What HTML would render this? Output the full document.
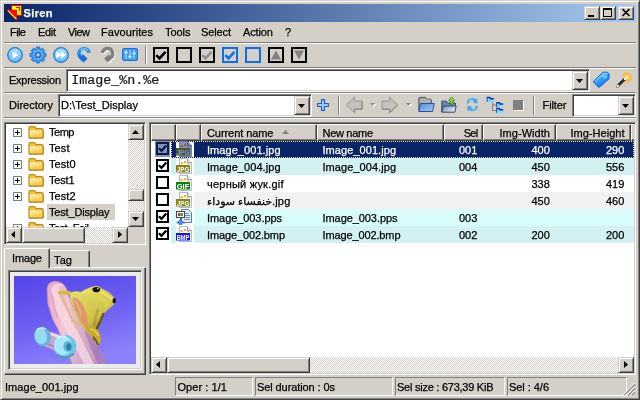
<!DOCTYPE html>
<html><head><meta charset="utf-8"><title>Siren</title><style>
html,body{margin:0;padding:0;background:#d4d0c8;}
body{width:640px;height:400px;overflow:hidden;position:relative;font:11px/13px "Liberation Sans","DejaVu Sans",sans-serif;color:#000;}
*{box-sizing:border-box;}
.a{position:absolute;}
.t{position:absolute;white-space:nowrap;height:13px;line-height:13px;-webkit-text-stroke:0.25px currentColor;}
.sunk{border:1px solid;border-color:#808080 #fff #fff #808080;box-shadow:inset 1px 1px #404040,inset -1px -1px #d4d0c8;background:#fff;}
.btn{border:1px solid;border-color:#d4d0c8 #404040 #404040 #d4d0c8;box-shadow:inset 1px 1px #fff,inset -1px -1px #808080;background:#d4d0c8;}
.trk{background:repeating-conic-gradient(#fff 0 25%,#d4d0c8 0 50%) 0 0/2px 2px;}
.hs{height:2px;border-top:1px solid #808080;border-bottom:1px solid #fff;}
.vs{width:2px;border-left:1px solid #808080;border-right:1px solid #fff;}
.hd{position:absolute;top:124px;height:17px;background:#d4d0c8;border:1px solid;border-color:#fff #404040 #404040 #fff;box-shadow:inset -1px -1px #808080;}
.pan{border:1px solid;border-color:#808080 #fff #fff #808080;box-shadow:inset 1px 1px #fff,inset -1px -1px #808080;}
svg{position:absolute;overflow:visible;}
</style></head><body>
<div id="root" style="position:absolute;left:0;top:0;width:640px;height:400px;will-change:transform">
<div class="a" style="left:0;top:0;width:640px;height:400px;border:1px solid;border-color:#d4d0c8 #404040 #404040 #d4d0c8;box-shadow:inset 1px 1px #fff,inset -1px -1px #808080;"></div>
<div class="a" style="left:4px;top:4px;width:632px;height:18px;background:linear-gradient(90deg,#0a246a,#a6caf0);"></div>
<svg style="left:0;top:0" width="24" height="24" viewBox="0 0 24 24"><rect x="11.5" y="5.5" width="10" height="10" fill="#ffff00" stroke="#ff0000"/><polygon points="6,9.7 17,9.7 17,21" fill="#ff0000"/><path d="M8 10.6L16.3 19" stroke="#ffff00" stroke-width="1.1"/><path d="M16 7.5h3.5v3.5" fill="none" stroke="#ff0000" stroke-width="1.1"/></svg>
<span class="t" id="t1" style="top:7px;left:23.5px;letter-spacing:0.371px;font-weight:bold;color:#fff;">Siren</span>
<div class="a btn" style="left:584px;top:6px;width:16px;height:14px;"></div>
<div class="a btn" style="left:600px;top:6px;width:16px;height:14px;"></div>
<div class="a btn" style="left:618px;top:6px;width:16px;height:14px;"></div>
<div class="a" style="left:588px;top:15px;width:6px;height:2px;background:#000"></div>
<div class="a" style="left:603px;top:8px;width:9px;height:9px;border:1px solid #000;border-top-width:2px"></div>
<svg style="left:622px;top:9px" width="8" height="7" viewBox="0 0 8 7"><path d="M0.5 0L7.5 7M7.5 0L0.5 7" stroke="#000" stroke-width="1.6" fill="none"/></svg>
<span class="t" id="t2" style="top:26px;left:10px;letter-spacing:-0.578px;">File</span>
<span class="t" id="t3" style="top:26px;left:38px;letter-spacing:-0.323px;">Edit</span>
<span class="t" id="t4" style="top:26px;left:68px;letter-spacing:-0.552px;">View</span>
<span class="t" id="t5" style="top:26px;left:101px;letter-spacing:0.071px;">Favourites</span>
<span class="t" id="t6" style="top:26px;left:165px;letter-spacing:-0.047px;">Tools</span>
<span class="t" id="t7" style="top:26px;left:201px;letter-spacing:-0.116px;">Select</span>
<span class="t" id="t8" style="top:26px;left:243px;letter-spacing:-0.116px;">Action</span>
<span class="t" id="t9" style="top:26px;left:285px;">?</span>
<div class="a hs" style="left:4px;top:42px;width:632px"></div>
<svg style="left:7px;top:47px" width="16" height="16" viewBox="0 0 16 16"><defs><radialGradient id="g15" cx="0.5" cy="0.35" r="0.7"><stop offset="0" stop-color="#c4eeff"/><stop offset="1" stop-color="#4cb2f8"/></radialGradient></defs><circle cx="8" cy="8" r="7.3" fill="url(#g15)" stroke="#2178d6" stroke-width="1.2"/><polygon points="5,3.6 5,12.2 12.8,7.9" fill="#fff" stroke="#5aa8f0" stroke-width="0.6"/></svg>
<svg style="left:30px;top:47px" width="16" height="16" viewBox="0 0 16 16"><polygon points="13.18,5.87 15.94,6.39 15.94,9.61 13.18,10.13 13.17,10.16 14.75,12.48 12.48,14.75 10.16,13.17 10.13,13.18 9.61,15.94 6.39,15.94 5.87,13.18 5.84,13.17 3.52,14.75 1.25,12.48 2.83,10.16 2.82,10.13 0.06,9.61 0.06,6.39 2.82,5.87 2.83,5.84 1.25,3.52 3.52,1.25 5.84,2.83 5.87,2.82 6.39,0.06 9.61,0.06 10.13,2.82 10.16,2.83 12.48,1.25 14.75,3.52 13.17,5.84" fill="#3a98f0" stroke="#1a6cd0" stroke-width="0.9" stroke-linejoin="round"/><circle cx="8" cy="8" r="4.4" fill="none" stroke="#6cbcf8" stroke-width="1.2"/><circle cx="8" cy="8" r="2.3" fill="#d4d0c8" stroke="#1a5cb8" stroke-width="1.1"/></svg>
<svg style="left:53px;top:47px" width="16" height="16" viewBox="0 0 16 16"><defs><radialGradient id="g61" cx="0.5" cy="0.35" r="0.7"><stop offset="0" stop-color="#c4eeff"/><stop offset="1" stop-color="#4cb2f8"/></radialGradient></defs><circle cx="8" cy="8" r="7.3" fill="url(#g61)" stroke="#2178d6" stroke-width="1.2"/><polygon points="3.2,4.6 3.2,11.6 8,8.1" fill="#fff"/><polygon points="8.2,4.6 8.2,11.6 13.2,8.1" fill="#fff"/></svg>
<svg style="left:74px;top:44px" width="44" height="22" viewBox="0 0 44 22"><defs><linearGradient id="ub" x1="0" y1="0" x2="0.6" y2="1"><stop offset="0" stop-color="#28a8ff"/><stop offset="0.5" stop-color="#1c84ec"/><stop offset="1" stop-color="#0c5cd0"/></linearGradient></defs><path d="M15.0 8.6A5.1 5.1 0 1 0 8.0 14.2" fill="none" stroke="url(#ub)" stroke-width="3.4"/><path d="M14.6 7.6A4.6 4.6 0 0 0 6.5 6.5" fill="none" stroke="#70d0ff" stroke-width="1.2"/><polygon points="8.3,9.9 13.6,14.4 9.7,18.4 6.3,15.8" fill="#1470e0"/><g transform="translate(1,1)"><path d="M28.5 9A5.1 5.1 0 1 1 35.6 14.2" fill="none" stroke="#fff" stroke-width="3.4"/><polygon points="35.3,9.9 30,14.4 33.9,18.4 37.3,15.8" fill="#fff"/></g><path d="M28.5 9A5.1 5.1 0 1 1 35.6 14.2" fill="none" stroke="#808080" stroke-width="3.4"/><polygon points="35.3,9.9 30,14.4 33.9,18.4 37.3,15.8" fill="#808080"/></svg>
<svg style="left:122px;top:48px" width="16" height="13" viewBox="0 0 16 13"><rect x="0.5" y="0.5" width="15" height="12" rx="1.5" fill="#379cf2" stroke="#1c72d8"/><path d="M4 2v9M8 2v9M12 2v9" stroke="#bfe4ff" stroke-width="1"/><path d="M2.5 4.5h3M6.5 8.5h3M10.5 5.5h3" stroke="#fff" stroke-width="1.6"/></svg>
<div class="a vs" style="left:145px;top:46px;height:18px"></div>
<svg style="left:153px;top:47px" width="16" height="16" viewBox="0 0 16 16"><rect x="1" y="1" width="14" height="14" fill="none" stroke="#000" stroke-width="2"/><path d="M3.3 8.2l3.2 3.2l6-6.6" fill="none" stroke="#000" stroke-width="2.6"/></svg>
<svg style="left:176px;top:47px" width="16" height="16" viewBox="0 0 16 16"><rect x="1" y="1" width="14" height="14" fill="none" stroke="#000" stroke-width="2"/></svg>
<svg style="left:199px;top:47px" width="16" height="16" viewBox="0 0 16 16"><rect x="1" y="1" width="14" height="14" fill="none" stroke="#000" stroke-width="2"/><path d="M3.3 8.2l3.2 3.2l6-6.6" fill="none" stroke="#909090" stroke-width="2.6"/></svg>
<svg style="left:222px;top:47px" width="16" height="16" viewBox="0 0 16 16"><rect x="1" y="1" width="14" height="14" fill="none" stroke="#0f6ee6" stroke-width="2"/><path d="M3.3 8.2l3.2 3.2l6-6.6" fill="none" stroke="#0f6ee6" stroke-width="2.6"/></svg>
<svg style="left:245px;top:47px" width="16" height="16" viewBox="0 0 16 16"><rect x="1" y="1" width="14" height="14" fill="none" stroke="#0f6ee6" stroke-width="2"/></svg>
<svg style="left:268px;top:47px" width="16" height="16" viewBox="0 0 16 16"><rect x="1" y="1" width="14" height="14" fill="none" stroke="#000" stroke-width="2"/><polygon points="8,3.5 13,12.5 3,12.5" fill="#808080"/></svg>
<svg style="left:291px;top:47px" width="16" height="16" viewBox="0 0 16 16"><rect x="1" y="1" width="14" height="14" fill="none" stroke="#000" stroke-width="2"/><polygon points="8,12.5 13,3.5 3,3.5" fill="#808080"/></svg>
<div class="a hs" style="left:4px;top:67px;width:632px"></div>
<span class="t" id="t10" style="top:74px;left:9px;letter-spacing:-0.269px;">Expression</span>
<div class="a sunk" style="left:66px;top:69px;width:524px;height:23px"></div>
<span class="t" id="expr" style="left:71.2px;top:73.2px;height:16px;line-height:16px;font:13.33px/16px 'Liberation Mono',monospace;transform:scaleY(0.9);transform-origin:0 12px;color:#1a1a1a;">Image_%n.%e</span>
<div class="a btn" style="left:572px;top:71px;width:16px;height:19px"></div>
<svg style="left:576px;top:79px" width="7" height="4"><polygon points="0,0 7,0 3.5,4" fill="#000"/></svg>
<svg style="left:590px;top:68px" width="46" height="26" viewBox="0 0 46 26"><defs><linearGradient id="tg" x1="0.2" y1="0" x2="0.8" y2="1"><stop offset="0" stop-color="#8cdcff"/><stop offset="0.45" stop-color="#2ea4ff"/><stop offset="1" stop-color="#0864e0"/></linearGradient></defs><polygon points="3.2,13.7 12.9,4.2 17.4,4.2 19.2,6 19,10.8 8.8,19.6" fill="url(#tg)" stroke="#0c5cd8" stroke-width="1" stroke-linejoin="round"/><path d="M5 13.6L13.3 5.4h3.6" fill="none" stroke="#9adcff" stroke-width="1"/><circle cx="14.8" cy="8.6" r="1.5" fill="#dff2ff" stroke="#7cc8ff" stroke-width="0.6"/><path d="M14.8 7.6v2M13.8 8.6h2" stroke="#2a8cf0" stroke-width="0.6"/><path d="M34.4 8.1L32.0 6.7M35.6 7.1L34.3 4.5M37.1 6.8L37.5 4.1M38.4 7.5L40.3 5.4M39.2 8.8L41.9 8.1M39.1 10.3L41.8 11.2M38.2 11.5L39.9 13.8M36.8 12.0L36.9 14.8M35.3 11.6L33.8 14.0" stroke="#ffb010" stroke-width="1.3"/><circle cx="36.7" cy="9.4" r="2.6" fill="#ffd84a"/><path d="M27.4 18.2L35.8 10" stroke="#1c1c1c" stroke-width="2.8" stroke-linecap="round"/><path d="M28.5 17.2L34.5 11.2" stroke="#787878" stroke-width="0.9" stroke-dasharray="1 1"/><path d="M35 10.8L36.4 9.4" stroke="#fff" stroke-width="2.6" stroke-linecap="round"/><path d="M27.3 18.3L28 17.6" stroke="#e8e8e8" stroke-width="2.2" stroke-linecap="round"/></svg>
<div class="a hs" style="left:4px;top:92px;width:632px"></div>
<span class="t" id="t11" style="top:99px;left:9px;letter-spacing:-0.002px;">Directory</span>
<div class="a sunk" style="left:58px;top:94px;width:254px;height:23px"></div>
<span class="t" id="t12" style="top:99px;left:61px;letter-spacing:0.041px;">D:\Test_Display</span>
<div class="a btn" style="left:294px;top:96px;width:16px;height:19px"></div>
<svg style="left:298px;top:104px" width="7" height="4"><polygon points="0,0 7,0 3.5,4" fill="#000"/></svg>
<svg style="left:317px;top:99px" width="12" height="12" viewBox="0 0 12 12"><path d="M4.5 0.6h3v3.9h3.9v3H7.5v3.9h-3V7.5H0.6v-3h3.9z" fill="#9cc8f6" stroke="#2a5cb8" stroke-width="1.1" stroke-linejoin="round"/></svg>
<div class="a vs" style="left:338px;top:96px;height:19px"></div>
<svg style="left:345px;top:96px" width="18" height="18" viewBox="0 0 18 18"><polygon points="1.2,9 9.5,1.2 9.5,5 17,5 17,13 9.5,13 9.5,16.8" fill="#c4c2bc" stroke="#949494" stroke-width="1" stroke-linejoin="round"/><path d="M9.5 13.4v3.2M9.8 13.3h7.4v-8" fill="none" stroke="#808080" stroke-width="0.8"/></svg>
<svg style="left:370px;top:103px" width="7" height="5"><polygon points="1,1 6,1 3.5,4" fill="#fff"/><polygon points="0,0 5,0 2.5,3" fill="#8c8c8c"/></svg>
<svg style="left:381px;top:96px" width="18" height="18" viewBox="0 0 18 18"><polygon points="16.8,9 8.5,1.2 8.5,5 1,5 1,13 8.5,13 8.5,16.8" fill="#c4c2bc" stroke="#949494" stroke-width="1" stroke-linejoin="round"/><path d="M1 13.3h7.6v3.3l8-7.5" fill="none" stroke="#808080" stroke-width="0.8"/></svg>
<svg style="left:406px;top:103px" width="7" height="5"><polygon points="1,1 6,1 3.5,4" fill="#fff"/><polygon points="0,0 5,0 2.5,3" fill="#8c8c8c"/></svg>
<svg style="left:414px;top:92px" width="70" height="26" viewBox="0 0 70 26"><defs><linearGradient id="f1" x1="0" y1="0" x2="1" y2="1"><stop offset="0" stop-color="#4c8ce4"/><stop offset="1" stop-color="#a8c8f4"/></linearGradient><linearGradient id="f2" x1="0" y1="0" x2="1" y2="0.6"><stop offset="0" stop-color="#6c88b8"/><stop offset="1" stop-color="#e4ecf6"/></linearGradient></defs><path d="M4.8 19V6.6Q4.8 5.4 6 5.4h5.4l1.6 1.8h3.6Q17.4 7.2 17.4 8.4V12" fill="#a4a4a4" stroke="#50545c" stroke-width="1"/><path d="M6 8h10M6 10h10" stroke="#c4c4c4" stroke-width="0.8"/><path d="M6.6 11.5h13.6l-1.6 8H4.8z" fill="url(#f1)" stroke="#30508c" stroke-width="1"/><path d="M27.8 20V9.2h4.6l1.4 1.8h7.6v3" fill="#6c86b4" stroke="#34486c" stroke-width="1"/><path d="M29.4 14h12.8l-1.4 6.2H27.8z" fill="url(#f2)" stroke="#34486c" stroke-width="1"/><polygon points="37.6,5 40.6,8.6 38.8,8.6 38.8,12.4 36.4,12.4 36.4,8.6 34.6,8.6" fill="#84e428" stroke="#2c7414" stroke-width="0.7"/><path d="M53.8 11.2Q54.6 7.4 58.2 7.2Q60.4 7.2 61.6 8.6" fill="none" stroke="#3ca4f0" stroke-width="2.3"/><polygon points="63.4,6 63.2,11.4 58.6,10.2" fill="#3ca4f0"/><path d="M63 14Q62.2 17.8 58.6 18Q56.4 18 55.2 16.6" fill="none" stroke="#3ca4f0" stroke-width="2.3"/><polygon points="53.4,19.2 53.6,13.8 58.2,15" fill="#3ca4f0"/><path d="M54.6 10Q55.6 7.6 58.4 7.4M62.2 15.2Q61.2 17.6 58.4 17.8" fill="none" stroke="#a4e0ff" stroke-width="0.9"/></svg>
<svg style="left:480px;top:92px" width="30" height="26" viewBox="0 0 30 26"><path d="M12.5 10v8.5h4M12.5 13h4" fill="none" stroke="#808080" stroke-width="1"/><path d="M6.8 5h3l0.8 1h3.2v4.2h-7z" fill="#84dcff" stroke="none"/><path d="M6.8 5.6h3l0.8 1.2h3.2" fill="none" stroke="#1230a8" stroke-width="1.5"/><path d="M7.2 5.2v4.6" stroke="#1a50c8" stroke-width="1"/><path d="M16.2 10.2h3l0.8 1h3.2v4.2h-7z" fill="#84dcff" stroke="none"/><path d="M16.2 10.8h3l0.8 1.2h3.2" fill="none" stroke="#1230a8" stroke-width="1.5"/><path d="M16.6 10.4v4.6" stroke="#1a50c8" stroke-width="1"/><path d="M16.2 16h3l0.8 1h3.2v4.2h-7z" fill="#84dcff" stroke="none"/><path d="M16.2 16.6h3l0.8 1.2h3.2" fill="none" stroke="#1230a8" stroke-width="1.5"/><path d="M16.6 16.2v4.6" stroke="#1a50c8" stroke-width="1"/></svg>
<div class="a" style="left:514px;top:101px;width:10px;height:10px;background:#fff"></div>
<div class="a" style="left:513px;top:100px;width:10px;height:10px;background:#808080"></div>
<div class="a vs" style="left:533px;top:96px;height:19px"></div>
<span class="t" id="t13" style="top:99px;left:542.5px;letter-spacing:-0.091px;">Filter</span>
<div class="a sunk" style="left:572px;top:94px;width:64px;height:23px"></div>
<div class="a btn" style="left:618px;top:96px;width:16px;height:19px"></div>
<svg style="left:622px;top:104px" width="7" height="4"><polygon points="0,0 7,0 3.5,4" fill="#000"/></svg>
<div class="a hs" style="left:4px;top:117px;width:632px"></div>
<div class="a sunk" style="left:4px;top:122px;width:142px;height:123px"></div>
<div class="a" style="left:6px;top:124px;width:122px;height:103px;overflow:hidden;background:#fff" id="tree">
<svg style="left:7px;top:4px" width="9" height="9" viewBox="0 0 9 9"><rect x="0.5" y="0.5" width="8" height="8" fill="#fff" stroke="#808080"/><path d="M2 4.5h5M4.5 2v5" stroke="#000" stroke-width="1"/></svg>
<svg style="left:22px;top:1px" width="16" height="14" viewBox="0 0 16 14"><defs><linearGradient id="fg" x1="0" y1="0" x2="0.5" y2="1"><stop offset="0" stop-color="#fff4b8"/><stop offset="1" stop-color="#f6cc48"/></linearGradient></defs><path d="M1 12.2V3Q1 1.6 2.4 1.6h3.4Q6.8 1.6 7.4 2.6L8 3.6h6Q15 3.6 15 4.8V12.2Q15 13 14.2 13H1.8Q1 13 1 12.2z" fill="#f2c440" stroke="#c08a18" stroke-width="1.2"/><path d="M1.8 5.4h12.6v6.8H1.8z" fill="url(#fg)"/><path d="M1.2 13.2h13.4Q15.3 13.2 15.3 12.4V5" fill="none" stroke="#8c6410" stroke-width="0.8" opacity="0.8"/></svg>
<span class="t" id="t14" style="top:1.5px;left:43px;letter-spacing:-0.469px;">Temp</span>
<svg style="left:7px;top:20px" width="9" height="9" viewBox="0 0 9 9"><rect x="0.5" y="0.5" width="8" height="8" fill="#fff" stroke="#808080"/><path d="M2 4.5h5M4.5 2v5" stroke="#000" stroke-width="1"/></svg>
<svg style="left:22px;top:17px" width="16" height="14" viewBox="0 0 16 14"><defs><linearGradient id="fg" x1="0" y1="0" x2="0.5" y2="1"><stop offset="0" stop-color="#fff4b8"/><stop offset="1" stop-color="#f6cc48"/></linearGradient></defs><path d="M1 12.2V3Q1 1.6 2.4 1.6h3.4Q6.8 1.6 7.4 2.6L8 3.6h6Q15 3.6 15 4.8V12.2Q15 13 14.2 13H1.8Q1 13 1 12.2z" fill="#f2c440" stroke="#c08a18" stroke-width="1.2"/><path d="M1.8 5.4h12.6v6.8H1.8z" fill="url(#fg)"/><path d="M1.2 13.2h13.4Q15.3 13.2 15.3 12.4V5" fill="none" stroke="#8c6410" stroke-width="0.8" opacity="0.8"/></svg>
<span class="t" id="t15" style="top:17.5px;left:43px;letter-spacing:0.104px;">Test</span>
<svg style="left:7px;top:36px" width="9" height="9" viewBox="0 0 9 9"><rect x="0.5" y="0.5" width="8" height="8" fill="#fff" stroke="#808080"/><path d="M2 4.5h5M4.5 2v5" stroke="#000" stroke-width="1"/></svg>
<svg style="left:22px;top:33px" width="16" height="14" viewBox="0 0 16 14"><defs><linearGradient id="fg" x1="0" y1="0" x2="0.5" y2="1"><stop offset="0" stop-color="#fff4b8"/><stop offset="1" stop-color="#f6cc48"/></linearGradient></defs><path d="M1 12.2V3Q1 1.6 2.4 1.6h3.4Q6.8 1.6 7.4 2.6L8 3.6h6Q15 3.6 15 4.8V12.2Q15 13 14.2 13H1.8Q1 13 1 12.2z" fill="#f2c440" stroke="#c08a18" stroke-width="1.2"/><path d="M1.8 5.4h12.6v6.8H1.8z" fill="url(#fg)"/><path d="M1.2 13.2h13.4Q15.3 13.2 15.3 12.4V5" fill="none" stroke="#8c6410" stroke-width="0.8" opacity="0.8"/></svg>
<span class="t" id="t16" style="top:33.5px;left:43px;letter-spacing:0.051px;">Test0</span>
<svg style="left:7px;top:52px" width="9" height="9" viewBox="0 0 9 9"><rect x="0.5" y="0.5" width="8" height="8" fill="#fff" stroke="#808080"/><path d="M2 4.5h5M4.5 2v5" stroke="#000" stroke-width="1"/></svg>
<svg style="left:22px;top:49px" width="16" height="14" viewBox="0 0 16 14"><defs><linearGradient id="fg" x1="0" y1="0" x2="0.5" y2="1"><stop offset="0" stop-color="#fff4b8"/><stop offset="1" stop-color="#f6cc48"/></linearGradient></defs><path d="M1 12.2V3Q1 1.6 2.4 1.6h3.4Q6.8 1.6 7.4 2.6L8 3.6h6Q15 3.6 15 4.8V12.2Q15 13 14.2 13H1.8Q1 13 1 12.2z" fill="#f2c440" stroke="#c08a18" stroke-width="1.2"/><path d="M1.8 5.4h12.6v6.8H1.8z" fill="url(#fg)"/><path d="M1.2 13.2h13.4Q15.3 13.2 15.3 12.4V5" fill="none" stroke="#8c6410" stroke-width="0.8" opacity="0.8"/></svg>
<span class="t" id="t17" style="top:49.5px;left:43px;letter-spacing:-0.199px;">Test1</span>
<svg style="left:7px;top:68px" width="9" height="9" viewBox="0 0 9 9"><rect x="0.5" y="0.5" width="8" height="8" fill="#fff" stroke="#808080"/><path d="M2 4.5h5M4.5 2v5" stroke="#000" stroke-width="1"/></svg>
<svg style="left:22px;top:65px" width="16" height="14" viewBox="0 0 16 14"><defs><linearGradient id="fg" x1="0" y1="0" x2="0.5" y2="1"><stop offset="0" stop-color="#fff4b8"/><stop offset="1" stop-color="#f6cc48"/></linearGradient></defs><path d="M1 12.2V3Q1 1.6 2.4 1.6h3.4Q6.8 1.6 7.4 2.6L8 3.6h6Q15 3.6 15 4.8V12.2Q15 13 14.2 13H1.8Q1 13 1 12.2z" fill="#f2c440" stroke="#c08a18" stroke-width="1.2"/><path d="M1.8 5.4h12.6v6.8H1.8z" fill="url(#fg)"/><path d="M1.2 13.2h13.4Q15.3 13.2 15.3 12.4V5" fill="none" stroke="#8c6410" stroke-width="0.8" opacity="0.8"/></svg>
<span class="t" id="t18" style="top:65.5px;left:43px;letter-spacing:0.051px;">Test2</span>
<svg style="left:22px;top:81px" width="16" height="14" viewBox="0 0 16 14"><defs><linearGradient id="fg" x1="0" y1="0" x2="0.5" y2="1"><stop offset="0" stop-color="#fff4b8"/><stop offset="1" stop-color="#f6cc48"/></linearGradient></defs><path d="M1 12.2V3Q1 1.6 2.4 1.6h3.4Q6.8 1.6 7.4 2.6L8 3.6h6Q15 3.6 15 4.8V12.2Q15 13 14.2 13H1.8Q1 13 1 12.2z" fill="#f2c440" stroke="#c08a18" stroke-width="1.2"/><path d="M1.8 5.4h12.6v6.8H1.8z" fill="url(#fg)"/><path d="M1.2 13.2h13.4Q15.3 13.2 15.3 12.4V5" fill="none" stroke="#8c6410" stroke-width="0.8" opacity="0.8"/></svg>
<div class="a" style="left:41px;top:80px;width:68px;height:16px;background:#d4d0c8"></div>
<span class="t" id="t19" style="top:81.5px;left:43px;letter-spacing:-0.169px;">Test_Display</span>
<svg style="left:7px;top:100px" width="9" height="9" viewBox="0 0 9 9"><rect x="0.5" y="0.5" width="8" height="8" fill="#fff" stroke="#808080"/><path d="M2 4.5h5M4.5 2v5" stroke="#000" stroke-width="1"/></svg>
<svg style="left:22px;top:97px" width="16" height="14" viewBox="0 0 16 14"><defs><linearGradient id="fg" x1="0" y1="0" x2="0.5" y2="1"><stop offset="0" stop-color="#fff4b8"/><stop offset="1" stop-color="#f6cc48"/></linearGradient></defs><path d="M1 12.2V3Q1 1.6 2.4 1.6h3.4Q6.8 1.6 7.4 2.6L8 3.6h6Q15 3.6 15 4.8V12.2Q15 13 14.2 13H1.8Q1 13 1 12.2z" fill="#f2c440" stroke="#c08a18" stroke-width="1.2"/><path d="M1.8 5.4h12.6v6.8H1.8z" fill="url(#fg)"/><path d="M1.2 13.2h13.4Q15.3 13.2 15.3 12.4V5" fill="none" stroke="#8c6410" stroke-width="0.8" opacity="0.8"/></svg>
<span class="t" id="t20" style="top:97.5px;left:43px;letter-spacing:-0.504px;">Test_Fail</span>
</div>
<div class="a trk" style="left:128px;top:124px;width:16px;height:103px"></div>
<div class="a btn" style="left:128px;top:124px;width:16px;height:16px"></div>
<svg style="left:132px;top:130px" width="7" height="4"><polygon points="0,4 7,4 3.5,0" fill="#000"/></svg>
<div class="a btn" style="left:128px;top:189px;width:16px;height:12px"></div>
<div class="a btn" style="left:128px;top:211px;width:16px;height:16px"></div>
<svg style="left:132px;top:217px" width="7" height="4"><polygon points="0,0 7,0 3.5,4" fill="#000"/></svg>
<div class="a trk" style="left:6px;top:227px;width:122px;height:16px"></div>
<div class="a btn" style="left:6px;top:227px;width:16px;height:16px"></div>
<svg style="left:11px;top:231px" width="4" height="7"><polygon points="4,0 4,7 0,3.5" fill="#000"/></svg>
<div class="a btn" style="left:22px;top:227px;width:63px;height:16px"></div>
<div class="a btn" style="left:112px;top:227px;width:16px;height:16px"></div>
<svg style="left:118px;top:231px" width="4" height="7"><polygon points="0,0 0,7 4,3.5" fill="#000"/></svg>
<div class="a" style="left:128px;top:227px;width:16px;height:16px;background:#d4d0c8"></div>
<div class="a" style="left:4px;top:267px;width:142px;height:108px;border:1px solid;border-color:#fff #404040 #404040 #fff;box-shadow:inset -1px -1px #808080"></div>
<div class="a" style="left:49px;top:250px;width:41px;height:17px;border:1px solid;border-color:#fff #404040 transparent #fff;border-bottom:none;border-radius:2px 2px 0 0;box-shadow:inset -1px 0 #808080"></div>
<div class="a" style="left:4px;top:248px;width:46px;height:20px;background:#d4d0c8;border:1px solid;border-color:#fff #404040 transparent #fff;border-bottom:none;border-radius:2px 2px 0 0;box-shadow:inset -1px 0 #808080"></div>
<span class="t" id="t21" style="top:252px;left:12px;letter-spacing:-0.145px;">Image</span>
<span class="t" id="t22" style="top:254px;left:54px;letter-spacing:0.125px;">Tag</span>
<div class="a" style="left:8px;top:270px;width:134px;height:100px;border:1px solid;border-color:#808080 #fff #fff #808080;box-shadow:inset 1px 1px #404040,inset -1px -1px #d4d0c8;background:#ececec"></div>
<svg style="left:14px;top:276px" width="122" height="88" viewBox="0 0 122 88">
<defs>
<linearGradient id="bgv" x1="0.1" y1="0" x2="0.45" y2="1"><stop offset="0" stop-color="#5646ea"/><stop offset="0.5" stop-color="#6c5ef2"/><stop offset="1" stop-color="#8c80fa"/></linearGradient>
<linearGradient id="brd" x1="0" y1="0" x2="1" y2="0.25"><stop offset="0" stop-color="#e8a8c4"/><stop offset="0.4" stop-color="#f2c6d4"/><stop offset="1" stop-color="#b890c8"/></linearGradient>
<linearGradient id="frg" x1="0.2" y1="0" x2="0.85" y2="1"><stop offset="0" stop-color="#e6de68"/><stop offset="0.65" stop-color="#d0c048"/><stop offset="1" stop-color="#7a641a"/></linearGradient>
<clipPath id="icl"><rect width="122" height="88"/></clipPath>
<filter id="sb" x="-10%" y="-10%" width="120%" height="120%"><feGaussianBlur stdDeviation="0.55"/></filter>
</defs>
<g clip-path="url(#icl)">
<rect width="122" height="88" fill="url(#bgv)"/>
<g filter="url(#sb)">
<!-- skateboard -->
<path d="M33 14Q33 5.5 41 5.5Q49 5.5 52 12L60 34L82 66L93 90L59 90L44 53L39 44L34 28Z" fill="url(#brd)" stroke="#c494bc" stroke-width="0.8"/>
<path d="M37 13Q40 9 45 10L52 30L62 52L80 88L70 88L50 50L41 32Z" fill="#f8dce6" opacity="0.75"/>
<path d="M46 13L56 40L66 58L84 88" fill="none" stroke="#e8b49c" stroke-width="1.4" opacity="0.9"/>
<path d="M70 54L83 67L93 90L84 90Z" fill="#a070c0" opacity="0.6"/>
<path d="M38 18L43 42" stroke="#dc98b8" stroke-width="1.2" opacity="0.8"/>
<path d="M40 10Q44 7.5 48 9.5" stroke="#fce8f0" stroke-width="1.4" fill="none"/>
<!-- axle -->
<path d="M27 53L54 61L51 79L25 68Z" fill="#c8a4d0"/>
<path d="M31 56L50 62.5" stroke="#f2d8ec" stroke-width="2.4"/>
<path d="M30 66.5L46 73" stroke="#a47cb8" stroke-width="1.6"/>
<!-- back wheel -->
<ellipse cx="28.6" cy="60.6" rx="8.3" ry="9.8" transform="rotate(-15 28.6 60.6)" fill="#64b4d4"/>
<ellipse cx="26.8" cy="60.2" rx="6.2" ry="8.2" transform="rotate(-15 26.8 60.2)" fill="#94dcf2"/>
<path d="M23 53.5Q27 51 31.5 53" stroke="#c8f4ff" stroke-width="1.5" fill="none"/>
<!-- front wheel -->
<ellipse cx="51" cy="70.2" rx="11.4" ry="11.2" fill="#70c4e4"/>
<ellipse cx="48.8" cy="69.4" rx="9" ry="9.8" fill="#a8e8fa"/>
<ellipse cx="53.8" cy="70.4" rx="4.4" ry="5.4" fill="#5cb6da"/>
<ellipse cx="54.8" cy="70.8" rx="2.5" ry="3.6" fill="#3080ac"/>
<path d="M43 79Q51.5 84.5 60 77.5" fill="none" stroke="#4a98bc" stroke-width="2"/>
<path d="M43 62Q47 59.5 52 60.5" stroke="#d4f8ff" stroke-width="1.4" fill="none"/>
<!-- frog arm over board -->
<path d="M43.5 15.5Q50 13.5 57 15.5L58 19.5Q50 17.5 44.5 18Z" fill="#cdbc3c"/>
<path d="M45 17L59 45" stroke="#deb870" stroke-width="1.6" opacity="0.95"/>
<!-- frog body -->
<path d="M56 17Q61 14 67 16Q73 11.5 80 10.5Q90 11.5 98 19Q103 24 101 27.5Q99 29.5 97 31Q92 35 89 39Q88.5 45 86 49Q84 53 81 55L75 56.5Q68 52 64 44Q59 32 57 25Q55.5 20 56 17Z" fill="url(#frg)"/>
<!-- belly orange -->
<path d="M58.5 21Q66 22 70 31Q75 44 74 53Q67 49 63 38Q58.5 28 58.5 21Z" fill="#e09468" opacity="0.92"/>
<path d="M61 24Q65 30 67 40" stroke="#eeb490" stroke-width="1.8" fill="none" opacity="0.8"/>
<!-- head / chest highlight -->
<path d="M68 17Q78 14 88 16.5Q95 20 99 24" fill="none" stroke="#ece460" stroke-width="2.6" opacity="0.85"/>
<path d="M72 21Q82 19.5 90 24Q94 27 92 31" fill="none" stroke="#dcd458" stroke-width="4" opacity="0.8"/>
<path d="M74 27Q80 28 84 33" fill="none" stroke="#d4c850" stroke-width="4" opacity="0.7"/>
<!-- body shadow right -->
<path d="M89.5 37Q87 45 82 54" stroke="#463610" stroke-width="2.4" fill="none" opacity="0.7"/>
<path d="M84 33Q81 42 80 50" stroke="#9c8626" stroke-width="2.6" fill="none" opacity="0.45"/>
<!-- hind leg / foot -->
<path d="M72 51Q79 49.5 84 54Q88 60 86.5 66Q85 70 81.5 68Q79.5 62 75 58.5Q71 55.5 72 51Z" fill="#c6aa2e"/>
<path d="M76 53Q82 54 84.5 60" stroke="#e4d04c" stroke-width="1.6" fill="none"/>
<path d="M79 61Q83 65 84 69" stroke="#6a5212" stroke-width="1.8" fill="none"/>
<path d="M57 44.5L70 50.5" stroke="#deb870" stroke-width="1.7"/>
<!-- eye, nose -->
<ellipse cx="82.3" cy="13.4" rx="3.8" ry="2.8" fill="#14110a"/>
<path d="M78 11.6Q82 9.2 86.5 11.4" stroke="#ece064" stroke-width="1" fill="none"/>
<circle cx="83.8" cy="12.6" r="0.8" fill="#fff"/>
<ellipse cx="100.2" cy="24.8" rx="1.7" ry="2.8" fill="#14110a"/>
</g>
</g>
</svg>

<div class="a sunk" style="left:149px;top:122px;width:487px;height:253px"></div>
<div class="hd" style="left:151px;width:25px"></div>
<div class="hd" style="left:176px;width:25px"></div>
<div class="hd" style="left:201px;width:116px"></div>
<div class="hd" style="left:317px;width:127px"></div>
<div class="hd" style="left:444px;width:39px"></div>
<div class="hd" style="left:483px;width:73px"></div>
<div class="hd" style="left:556px;width:75px"></div>
<div class="hd" style="left:631px;width:3px;border-right:none;box-shadow:inset 0 -1px #808080"></div>
<span class="t" id="t23" style="top:127px;left:207px;letter-spacing:-0.070px;">Current name</span>
<svg style="left:282px;top:130px" width="7" height="4"><polygon points="0,4 7,4 3.5,0" fill="#808080"/></svg>
<span class="t" id="t24" style="top:127px;left:322.5px;letter-spacing:-0.297px;">New name</span>
<span class="t" id="t25" style="top:127px;right:162.5px;letter-spacing:-0.700px;">Sel</span>
<span class="t" id="t26" style="top:127px;right:90px;letter-spacing:0.047px;">Img-Width</span>
<span class="t" id="t27" style="top:127px;right:15.5px;letter-spacing:0.023px;">Img-Height</span>
<div class="a" style="left:171px;top:141px;width:463px;height:17px;background:#0a246a;outline:1px dotted #f5db95;outline-offset:-1px"></div>
<div class="a" style="left:176px;top:142px;width:18px;height:15px;background:#fff"></div>
<div class="a" style="left:155px;top:141px;width:15px;height:16px;background:#8492b8"></div>
<svg style="left:156px;top:142px" width="13" height="13" viewBox="0 0 13 13"><rect x="1" y="1" width="11" height="11" fill="none" stroke="#0a1a50" stroke-width="2"/><path d="M2.9 6.2l2.6 2.6l4.8-5.4" fill="none" stroke="#0a1a50" stroke-width="2.3"/></svg>
<svg style="left:176px;top:141px" width="16" height="16" viewBox="0 0 16 16"><g><path d="M3.5 0.5h8l4 4v11h-12z" fill="#fff" stroke="#a8b8e0" stroke-width="1"/><path d="M11.5 0.5v4h4" fill="#e8ecf8" stroke="#8898c8" stroke-width="1"/><circle cx="5.7" cy="5.2" r="1.15" fill="#ffa418"/><circle cx="9" cy="4.2" r="1.15" fill="#ffa418"/><circle cx="12.3" cy="5.2" r="1.15" fill="#ffa418"/><rect x="0" y="7" width="14" height="7.5" fill="#868612"/><text x="7" y="13.5" font-family="Liberation Sans,sans-serif" font-weight="bold" font-size="7.2" text-anchor="middle" fill="#fff" textLength="12.6" lengthAdjust="spacingAndGlyphs">JPG</text><path d="M3.5 0.5h8l4 4v11h-12z" fill="#0a246a" opacity="0.5" stroke="#0a246a" stroke-opacity="0.5"/><rect x="0" y="7" width="3" height="7.5" fill="#0a246a" opacity="0.5"/></g></svg>
<span class="t" id="t28" style="top:143.5px;left:207px;letter-spacing:0.060px;color:#fff;">Image_001.jpg</span>
<span class="t" id="t29" style="top:143.5px;left:322.5px;letter-spacing:0.060px;color:#fff;">Image_001.jpg</span>
<span class="t" id="t30" style="top:143.5px;right:162.5px;letter-spacing:0.070px;color:#fff;">001</span>
<span class="t" id="t31" style="top:143.5px;right:90px;letter-spacing:0.070px;color:#fff;">400</span>
<span class="t" id="t32" style="top:143.5px;right:15.5px;letter-spacing:0.070px;color:#fff;">290</span>
<div class="a" style="left:171px;top:158px;width:463px;height:17px;background:#d3f1f3"></div>
<div class="a" style="left:176px;top:158px;width:18px;height:17px;background:#fff"></div>
<svg style="left:156px;top:159px" width="13" height="13" viewBox="0 0 13 13"><rect x="1" y="1" width="11" height="11" fill="#fff" stroke="#000" stroke-width="2"/><path d="M2.9 6.2l2.6 2.6l4.8-5.4" fill="none" stroke="#000" stroke-width="2.3"/></svg>
<svg style="left:176px;top:158px" width="16" height="16" viewBox="0 0 16 16"><g><path d="M3.5 0.5h8l4 4v11h-12z" fill="#fff" stroke="#a8b8e0" stroke-width="1"/><path d="M11.5 0.5v4h4" fill="#e8ecf8" stroke="#8898c8" stroke-width="1"/><circle cx="5.7" cy="5.2" r="1.15" fill="#ffa418"/><circle cx="9" cy="4.2" r="1.15" fill="#ffa418"/><circle cx="12.3" cy="5.2" r="1.15" fill="#ffa418"/><rect x="0" y="7" width="14" height="7.5" fill="#868612"/><text x="7" y="13.5" font-family="Liberation Sans,sans-serif" font-weight="bold" font-size="7.2" text-anchor="middle" fill="#fff" textLength="12.6" lengthAdjust="spacingAndGlyphs">JPG</text></g></svg>
<span class="t" id="t33" style="top:160.5px;left:207px;letter-spacing:0.060px;color:#000;">Image_004.jpg</span>
<span class="t" id="t34" style="top:160.5px;left:322.5px;letter-spacing:0.060px;color:#000;">Image_004.jpg</span>
<span class="t" id="t35" style="top:160.5px;right:162.5px;letter-spacing:0.070px;color:#000;">004</span>
<span class="t" id="t36" style="top:160.5px;right:90px;letter-spacing:0.070px;color:#000;">450</span>
<span class="t" id="t37" style="top:160.5px;right:15.5px;letter-spacing:0.070px;color:#000;">556</span>
<svg style="left:156px;top:176px" width="13" height="13" viewBox="0 0 13 13"><rect x="1" y="1" width="11" height="11" fill="#fff" stroke="#000" stroke-width="2"/></svg>
<svg style="left:176px;top:175px" width="16" height="16" viewBox="0 0 16 16"><g><path d="M3.5 0.5h8l4 4v11h-12z" fill="#fff" stroke="#a8b8e0" stroke-width="1"/><path d="M11.5 0.5v4h4" fill="#e8ecf8" stroke="#8898c8" stroke-width="1"/><circle cx="5.7" cy="5.2" r="1.15" fill="#ffa418"/><circle cx="9" cy="4.2" r="1.15" fill="#ffa418"/><circle cx="12.3" cy="5.2" r="1.15" fill="#ffa418"/><rect x="0" y="7" width="14" height="7.5" fill="#0a800a"/><text x="7" y="13.5" font-family="Liberation Sans,sans-serif" font-weight="bold" font-size="7.2" text-anchor="middle" fill="#fff" textLength="12.6" lengthAdjust="spacingAndGlyphs">GIF</text></g></svg>
<span class="t" id="t38" style="top:177.5px;left:207px;letter-spacing:0.221px;color:#000;">черный жук.gif</span>
<span class="t" id="t39" style="top:177.5px;right:90px;letter-spacing:0.070px;color:#000;">338</span>
<span class="t" id="t40" style="top:177.5px;right:15.5px;letter-spacing:0.070px;color:#000;">419</span>
<div class="a" style="left:171px;top:192px;width:463px;height:17px;background:#f2f2f2"></div>
<div class="a" style="left:176px;top:192px;width:18px;height:17px;background:#fff"></div>
<svg style="left:156px;top:193px" width="13" height="13" viewBox="0 0 13 13"><rect x="1" y="1" width="11" height="11" fill="#fff" stroke="#000" stroke-width="2"/></svg>
<svg style="left:176px;top:192px" width="16" height="16" viewBox="0 0 16 16"><g><path d="M3.5 0.5h8l4 4v11h-12z" fill="#fff" stroke="#a8b8e0" stroke-width="1"/><path d="M11.5 0.5v4h4" fill="#e8ecf8" stroke="#8898c8" stroke-width="1"/><circle cx="5.7" cy="5.2" r="1.15" fill="#ffa418"/><circle cx="9" cy="4.2" r="1.15" fill="#ffa418"/><circle cx="12.3" cy="5.2" r="1.15" fill="#ffa418"/><rect x="0" y="7" width="14" height="7.5" fill="#868612"/><text x="7" y="13.5" font-family="Liberation Sans,sans-serif" font-weight="bold" font-size="7.2" text-anchor="middle" fill="#fff" textLength="12.6" lengthAdjust="spacingAndGlyphs">JPG</text></g></svg>
<span class="t" id="t41" style="top:194.5px;left:207px;letter-spacing:0.209px;color:#000;direction:ltr;">خنفساء سوداء.jpg</span>
<span class="t" id="t42" style="top:194.5px;right:90px;letter-spacing:0.070px;color:#000;direction:ltr;">450</span>
<span class="t" id="t43" style="top:194.5px;right:15.5px;letter-spacing:0.070px;color:#000;direction:ltr;">460</span>
<div class="a" style="left:171px;top:209px;width:463px;height:17px;background:#d9fdfd"></div>
<div class="a" style="left:176px;top:209px;width:18px;height:17px;background:#fff"></div>
<svg style="left:156px;top:210px" width="13" height="13" viewBox="0 0 13 13"><rect x="1" y="1" width="11" height="11" fill="#fff" stroke="#000" stroke-width="2"/><path d="M2.9 6.2l2.6 2.6l4.8-5.4" fill="none" stroke="#000" stroke-width="2.3"/></svg>
<svg style="left:176px;top:209px" width="16" height="16" viewBox="0 0 16 16"><path d="M5.5 0.5h7l3 3v10h-10z" fill="#e4ecfc" stroke="#5878c0" stroke-width="1"/><path d="M8 4.5h5M8 6.5h6M8 8.5h6M8 10.5h6" stroke="#6c8cd0" stroke-width="1"/><rect x="0.5" y="2.5" width="8" height="6" fill="#fff" stroke="#404858" stroke-width="1"/><rect x="2" y="4" width="2.5" height="3" fill="#e03020"/><rect x="4.5" y="4" width="2.5" height="3" fill="#30b030"/><path d="M4.5 9v3" stroke="#404858" stroke-width="1"/><polygon points="4.5,10.5 8.5,14 6,14 6,15.5 3,15.5 3,14 0.5,14" fill="#4c8ce8" stroke="#2058b8" stroke-width="0.6"/></svg>
<span class="t" id="t44" style="top:211.5px;left:207px;letter-spacing:-0.070px;color:#000;">Image_003.pps</span>
<span class="t" id="t45" style="top:211.5px;left:322.5px;letter-spacing:-0.070px;color:#000;">Image_003.pps</span>
<span class="t" id="t46" style="top:211.5px;right:162.5px;letter-spacing:0.070px;color:#000;">003</span>
<div class="a" style="left:171px;top:226px;width:463px;height:17px;background:#d3f1f3"></div>
<div class="a" style="left:176px;top:226px;width:18px;height:17px;background:#fff"></div>
<svg style="left:156px;top:227px" width="13" height="13" viewBox="0 0 13 13"><rect x="1" y="1" width="11" height="11" fill="#fff" stroke="#000" stroke-width="2"/><path d="M2.9 6.2l2.6 2.6l4.8-5.4" fill="none" stroke="#000" stroke-width="2.3"/></svg>
<svg style="left:176px;top:226px" width="16" height="16" viewBox="0 0 16 16"><g><path d="M3.5 0.5h8l4 4v11h-12z" fill="#fff" stroke="#a8b8e0" stroke-width="1"/><path d="M11.5 0.5v4h4" fill="#e8ecf8" stroke="#8898c8" stroke-width="1"/><circle cx="5.7" cy="5.2" r="1.15" fill="#ffa418"/><circle cx="9" cy="4.2" r="1.15" fill="#ffa418"/><circle cx="12.3" cy="5.2" r="1.15" fill="#ffa418"/><rect x="0" y="7" width="14" height="7.5" fill="#1018f0"/><text x="7" y="13.5" font-family="Liberation Sans,sans-serif" font-weight="bold" font-size="7.2" text-anchor="middle" fill="#fff" textLength="12.6" lengthAdjust="spacingAndGlyphs">BMP</text></g></svg>
<span class="t" id="t47" style="top:228.5px;left:207px;letter-spacing:-0.125px;color:#000;">Image_002.bmp</span>
<span class="t" id="t48" style="top:228.5px;left:322.5px;letter-spacing:-0.125px;color:#000;">Image_002.bmp</span>
<span class="t" id="t49" style="top:228.5px;right:162.5px;letter-spacing:0.070px;color:#000;">002</span>
<span class="t" id="t50" style="top:228.5px;right:90px;letter-spacing:0.070px;color:#000;">200</span>
<span class="t" id="t51" style="top:228.5px;right:15.5px;letter-spacing:0.070px;color:#000;">200</span>
<div class="a trk" style="left:151px;top:357px;width:483px;height:16px"></div>
<div class="a btn" style="left:151px;top:357px;width:16px;height:16px"></div>
<svg style="left:156px;top:361px" width="4" height="7"><polygon points="4,0 4,7 0,3.5" fill="#000"/></svg>
<div class="a btn" style="left:167px;top:357px;width:143px;height:16px"></div>
<div class="a btn" style="left:618px;top:357px;width:16px;height:16px"></div>
<svg style="left:624px;top:361px" width="4" height="7"><polygon points="0,0 0,7 4,3.5" fill="#000"/></svg>
<span class="t" id="t52" style="top:381px;left:5px;letter-spacing:0.060px;">Image_001.jpg</span>
<div class="a" style="left:175px;top:377px;width:78px;height:19px;border:1px solid;border-color:#808080 #fff #fff #808080"></div>
<div class="a" style="left:255px;top:377px;width:138px;height:19px;border:1px solid;border-color:#808080 #fff #fff #808080"></div>
<div class="a" style="left:395px;top:377px;width:110px;height:19px;border:1px solid;border-color:#808080 #fff #fff #808080"></div>
<div class="a" style="left:507px;top:377px;width:120px;height:19px;border:1px solid;border-color:#808080 #fff #fff #808080"></div>
<span class="t" id="t53" style="top:381px;left:177.5px;letter-spacing:0.064px;">Oper : 1/1</span>
<span class="t" id="t54" style="top:381px;left:257px;letter-spacing:-0.094px;">Sel duration : 0s</span>
<span class="t" id="t55" style="top:381px;left:397px;letter-spacing:-0.251px;">Sel size : 673,39 KiB</span>
<span class="t" id="t56" style="top:381px;left:509px;letter-spacing:-0.045px;">Sel : 4/6</span>
<svg style="left:623px;top:383px" width="13" height="13" viewBox="0 0 13 13"><path d="M12 1L1 12M12 5L5 12M12 9L9 12" stroke="#808080" stroke-width="1.4"/><path d="M12 0L0 12M12 4L4 12M12 8L8 12" stroke="#fff" stroke-width="1"/></svg>
</div>
</body></html>
